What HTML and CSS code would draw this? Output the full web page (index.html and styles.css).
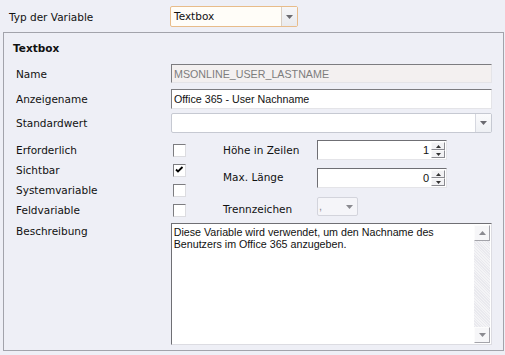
FILE: index.html
```html
<!DOCTYPE html>
<html lang="de">
<head>
<meta charset="utf-8">
<title>Typ der Variable</title>
<link rel="stylesheet" href="styles.css">
</head>
<body>
<div class="top">
  <span class="lbl top-lbl">Typ der Variable</span>
  <div class="combo combo-focus">
    <span class="combo-text">Textbox</span>
    <span class="dd"><svg width="7" height="4" viewBox="0 0 7 4"><path d="M0 0h7L3.5 4z" fill="#6a6a70"/></svg></span>
  </div>
</div>

<section class="panel">
  <h2 class="ph">Textbox</h2>

  <div class="row row-name">
    <span class="lbl">Name</span>
    <div class="field field-disabled">MSONLINE_USER_LASTNAME</div>
  </div>

  <div class="row row-disp">
    <span class="lbl">Anzeigename</span>
    <div class="field">Office 365 - User Nachname</div>
  </div>

  <div class="row row-std">
    <span class="lbl">Standardwert</span>
    <div class="combo combo-wide">
      <span class="combo-text"></span>
      <span class="dd"><svg width="7" height="4" viewBox="0 0 7 4"><path d="M0 0h7L3.5 4z" fill="#6a6a70"/></svg></span>
    </div>
  </div>

  <div class="opts">
    <div class="checks">
      <span class="lbl">Erforderlich</span><span class="cb"></span>
      <span class="lbl">Sichtbar</span><span class="cb cb-on"><svg width="9" height="9" viewBox="0 0 9 9"><path d="M1 3.5l2 2L7.5 1" fill="none" stroke="#000" stroke-width="1.8"/></svg></span>
      <span class="lbl">Systemvariable</span><span class="cb"></span>
      <span class="lbl">Feldvariable</span><span class="cb"></span>
    </div>
    <div class="extras">
      <div class="xrow x1">
        <span class="lbl xl">Höhe in Zeilen</span>
        <div class="spin">
          <span class="spin-val">1</span>
          <span class="spin-btns">
            <span class="sb"><svg width="5" height="3" viewBox="0 0 5 3"><path d="M0 3h5L2.5 0z" fill="#333"/></svg></span>
            <span class="sb"><svg width="5" height="3" viewBox="0 0 5 3"><path d="M0 0h5L2.5 3z" fill="#333"/></svg></span>
          </span>
        </div>
      </div>
      <div class="xrow x2">
        <span class="lbl xl xl-up">Max. Länge</span>
        <div class="spin">
          <span class="spin-val">0</span>
          <span class="spin-btns">
            <span class="sb"><svg width="5" height="3" viewBox="0 0 5 3"><path d="M0 3h5L2.5 0z" fill="#333"/></svg></span>
            <span class="sb"><svg width="5" height="3" viewBox="0 0 5 3"><path d="M0 0h5L2.5 3z" fill="#333"/></svg></span>
          </span>
        </div>
      </div>
      <div class="xrow x3">
        <span class="lbl xl xl-down">Trennzeichen</span>
        <div class="mini-combo">
          <span class="mini-text">,</span>
          <span class="mini-dd"><svg width="7" height="4" viewBox="0 0 7 4"><path d="M0 0h7L3.5 4z" fill="#8a8a90"/></svg></span>
        </div>
      </div>
    </div>
  </div>

  <div class="row row-desc">
    <span class="lbl lbl-top">Beschreibung</span>
    <div class="memo">
      <div class="memo-text">Diese Variable wird verwendet, um den Nachname des Benutzers im Office 365 anzugeben.</div>
      <div class="vscroll">
        <span class="vbtn"><svg width="7" height="4" viewBox="0 0 7 4"><path d="M0 4h7L3.5 0z" fill="#8a8a90"/></svg></span>
        <span class="vtrack"></span>
        <span class="vbtn"><svg width="7" height="4" viewBox="0 0 7 4"><path d="M0 0h7L3.5 4z" fill="#8a8a90"/></svg></span>
      </div>
    </div>
  </div>
</section>
</body>
</html>
```

FILE: styles.css
```css
* { box-sizing: border-box; }
html, body { margin: 0; padding: 0; }
body {
  width: 505px;
  height: 355px;
  overflow: hidden;
  background: #eeeff6;
  font-family: "DejaVu Sans", Verdana, sans-serif;
  font-size: 10.5px;
  color: #111;
}
.lbl { line-height: 14px; white-space: nowrap; }

.top {
  height: 32px;
  padding: 6px 0 0 9px;
  display: flex;
  align-items: flex-start;
}
.top-lbl { width: 161px; margin-top: 4px; }

.combo {
  display: flex;
  height: 21px;
  background: #fff;
  border: 1px solid #c6c9d2;
  border-radius: 2px;
}
.combo-text {
  flex: 1;
  padding-left: 3px;
  line-height: 19px;
  font-family: "DejaVu Sans", Verdana, sans-serif;
}
.dd {
  width: 16px;
  border-left: 1px solid #d6d8e0;
  display: flex;
  align-items: center;
  justify-content: center;
  background: linear-gradient(#fbfbfd, #eef0f4);
}
.combo-focus {
  width: 128px;
  border-color: #e8bc8a;
  background: #fffdf8;
}
.combo-focus .dd { background: linear-gradient(#f6f6f8, #e9eaee); border-left-color: #d9cfc4; }

.panel {
  margin-left: 3px;
  width: 501px;
  height: 319px;
  border: 1px solid #a2a3ab;
  padding: 8px 11px 0 12px;
}
.ph {
  margin: 0 0 0 -3px;
  font-size: 10.5px;
  font-weight: bold;
  line-height: 14px;
}

.row { display: flex; align-items: center; }
.row .lbl { width: 155px; }
.row-name { margin-top: 9px; height: 19px; }
.row-disp { margin-top: 6px; height: 20px; }
.row-std { margin-top: 4px; height: 20px; }

.field {
  width: 321px;
  height: 100%;
  background: #fff;
  border: 1px solid;
  border-color: #7c7c80 #e4e4e8 #e4e4e8 #7c7c80;
  padding-left: 2px;
  font-family: "Liberation Sans", Arial, sans-serif;
  font-size: 10.7px;
  display: flex;
  align-items: center;
  white-space: nowrap;
}
.field-disabled { background: #f3f0f0; color: #7d7d7d; }

.combo-wide { width: 321px; height: 20px; }

.opts { display: flex; margin-top: 7px; height: 80px; }
.checks {
  width: 207px;
  display: grid;
  grid-template-columns: 155px 52px;
  grid-auto-rows: 20px;
  align-items: center;
}
.cb {
  margin-left: 2px;
  width: 13px;
  height: 13px;
  background: #fff;
  border: 1px solid;
  border-color: #7c7c80 #dcdce0 #dcdce0 #7c7c80;
  display: flex;
  align-items: flex-start;
  justify-content: flex-start;
}
.cb-on { padding: 1px 0 0 1px; }

.extras { display: flex; flex-direction: column; }
.xrow { display: flex; align-items: center; }
.xl { width: 94px; }
.xl-up { margin-top: -3px; }
.xl-down { margin-top: 5px; }
.x2 { margin-top: 8px; }
.x3 { margin-top: 9px; }

.spin {
  width: 130px;
  height: 20px;
  background: #fff;
  border: 1px solid;
  border-color: #6f6f74 #e4e4e8 #e4e4e8 #6f6f74;
  display: flex;
  align-items: center;
  font-family: "Liberation Sans", Arial, sans-serif;
  font-size: 11px;
}
.spin-val { flex: 1; text-align: right; padding-right: 2px; }
.spin-btns { display: flex; flex-direction: column; width: 14px; height: 16px; margin-right: 1px; }
.sb {
  flex: 1;
  display: flex;
  align-items: center;
  justify-content: center;
  background: #f2f2f4;
  border: 1px solid;
  border-color: #fafafa #8a8a90 #8a8a90 #fafafa;
}

.mini-combo {
  width: 41px;
  height: 19px;
  border: 1px solid #d3d4dc;
  border-radius: 2px;
  background: #f5f5f9;
  display: flex;
}
.mini-text {
  flex: 1;
  color: #8a8a90;
  font-family: "Liberation Sans", Arial, sans-serif;
  font-size: 11px;
  line-height: 17px;
  padding-left: 1px;
}
.mini-dd { width: 16px; display: flex; align-items: center; justify-content: center; }

.row-desc { margin-top: 3px; align-items: flex-start; }
.lbl-top { margin-top: 1px; }
.memo {
  width: 322px;
  height: 122px;
  background: #fff;
  border: 1px solid;
  border-color: #6f6f74 #dcdce2 #dcdce2 #6f6f74;
  display: flex;
}
.memo-text {
  flex: 1;
  padding: 2px 0 0 2px;
  font-family: "Liberation Sans", Arial, sans-serif;
  font-size: 10.7px;
  line-height: 12px;
}
.vscroll {
  width: 17px;
  display: flex;
  flex-direction: column;
  padding: 1px 1px 1px 0;
}
.vtrack {
  flex: 1;
  background-color: #f4f4f6;
  background-image: repeating-linear-gradient(45deg, #e9e9ee 0 1px, transparent 1px 2px);
}
.vbtn {
  height: 16px;
  display: flex;
  align-items: center;
  justify-content: center;
  background: #f6f6f8;
  border: 1px solid;
  border-color: #fcfcfc #a4a4aa #a4a4aa #fcfcfc;
}
```
